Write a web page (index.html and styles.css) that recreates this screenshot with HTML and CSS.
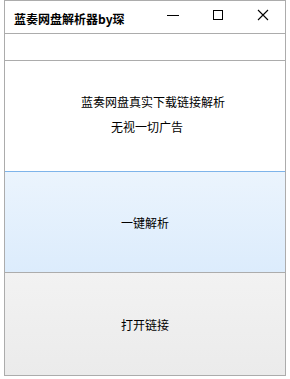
FILE: index.html
```html
<!DOCTYPE html>
<html lang="zh-CN">
<head>
    <meta charset="UTF-8">
    <title>蓝奏网盘解析器by琛</title>
    <link rel="stylesheet" href="styles.css">
</head>
<body>
<div class="window">
    <div class="titlebar">
        <div class="title">蓝奏网盘解析器by琛</div>
        <div class="controls">
            <span class="ctrl">
                <svg width="14" height="14" viewBox="0 0 14 14"><path d="M1 7.5h12" stroke="#000" stroke-width="1"/></svg>
            </span>
            <span class="ctrl">
                <svg width="14" height="14" viewBox="0 0 14 14"><rect x="2.5" y="2.5" width="9" height="9" fill="none" stroke="#000" stroke-width="1"/></svg>
            </span>
            <span class="ctrl">
                <svg width="14" height="14" viewBox="0 0 14 14"><path d="M2 2l10 10M12 2L2 12" stroke="#000" stroke-width="1.1"/></svg>
            </span>
        </div>
    </div>

    <!-- 链接输入框 -->
    <input class="link-input" type="text">

    <div class="info">
        <div class="line1">蓝奏网盘真实下载链接解析</div>
        <div class="line2">无视一切广告</div>
    </div>

    <button class="btn btn-parse">一键解析</button>
    <button class="btn btn-open">打开链接</button>
</div>
</body>
</html>
```

FILE: styles.css
```css
* {
    margin: 0;
    padding: 0;
    box-sizing: border-box;
    font-family: "Noto Sans CJK SC", "Liberation Sans", sans-serif;
}

body {
    background: #ffffff;
}

.window {
    margin-left: 4px;
    width: 282px;
    height: 376px;
    border: 1px solid #acacac;
    display: flex;
    flex-direction: column;
    background: #ffffff;
}

.titlebar {
    height: 33px;
    display: flex;
    align-items: center;
    border-bottom: 1px solid #acacac;
}

.title {
    flex: 1;
    padding-left: 9px;
    padding-top: 3px;
    font-size: 12px;
    font-weight: bold;
    color: #000;
}

.controls {
    display: flex;
    align-self: flex-start;
    padding-top: 6px;
}

.ctrl {
    width: 45px;
    height: 16px;
    display: flex;
    justify-content: center;
    align-items: center;
}

.link-input {
    height: 27px;
    border: none;
    border-bottom: 1px solid #acacac;
    outline: none;
    width: 100%;
}

.info {
    height: 110px;
    font-size: 12px;
    color: #000;
    padding-top: 28px;
}

.line1 {
    margin-left: 76px;
    line-height: 25px;
}

.line2 {
    margin-left: 106px;
    line-height: 25px;
}

.btn {
    width: 100%;
    border: none;
    font-size: 12px;
    color: #000;
    cursor: pointer;
}

.btn-parse {
    height: 101px;
    border-top: 1px solid #7eb4ea;
    background: linear-gradient(#ebf4fd, #dcecfc);
}

.btn-open {
    flex: 1;
    border-top: 1px solid #acacac;
    background: linear-gradient(#f2f2f2, #ebebeb);
}
```
